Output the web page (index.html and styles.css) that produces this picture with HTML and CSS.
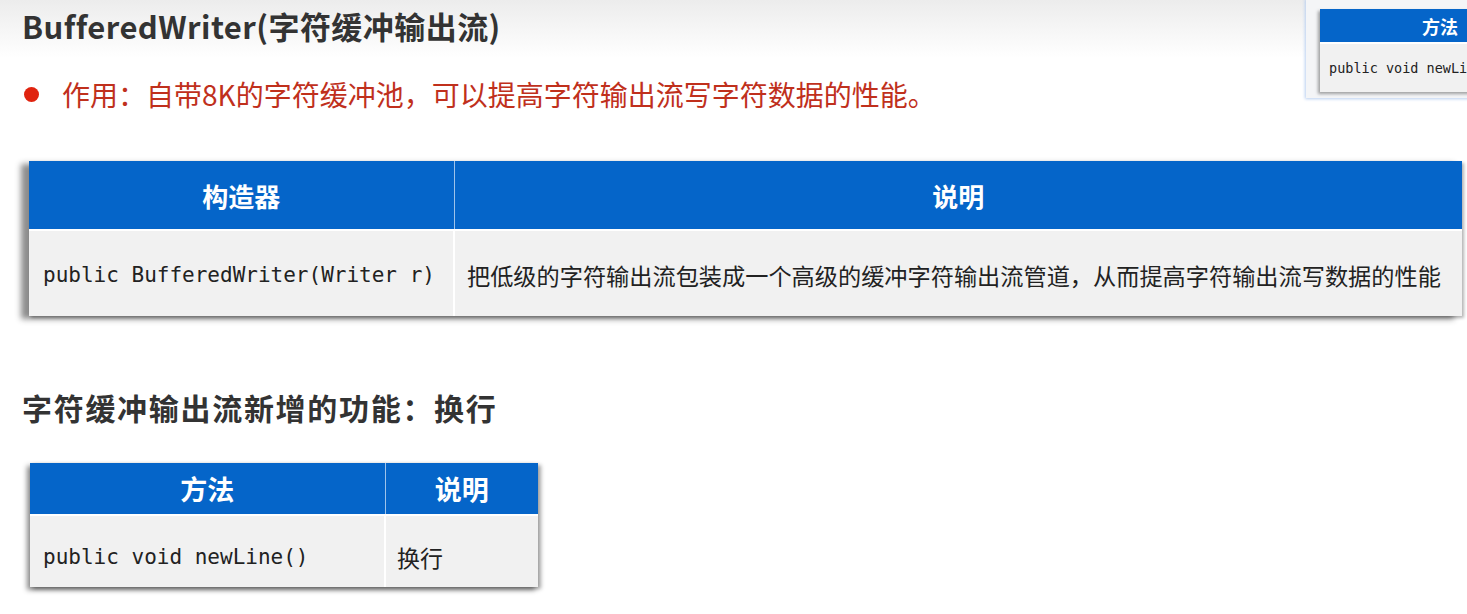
FILE: index.html
```html
<!DOCTYPE html>
<html lang="zh-CN">
<head>
<meta charset="utf-8">
<title>BufferedWriter</title>
<link rel="stylesheet" href="styles.css">
</head>
<body>
<div class="page">
  <h1 class="title">BufferedWriter(字符缓冲输出流)</h1>
  <p class="bullet"><span class="dot"></span>作用：自带8K的字符缓冲池，可以提高字符输出流写字符数据的性能。</p>

  <div class="tbl-wrap tbl-wrap-main">
    <table class="tbl tbl-main">
      <colgroup><col class="c1"><col class="c2"></colgroup>
      <thead>
        <tr><th>构造器</th><th>说明</th></tr>
      </thead>
      <tbody>
        <tr><td class="code">public BufferedWriter(Writer r)</td><td class="desc">把低级的字符输出流包装成一个高级的缓冲字符输出流管道，从而提高字符输出流写数据的性能</td></tr>
      </tbody>
    </table>
  </div>

  <h2 class="subtitle">字符缓冲输出流新增的功能：换行</h2>

  <div class="tbl-wrap tbl-wrap-small">
    <table class="tbl tbl-small">
      <colgroup><col class="s1"><col class="s2"></colgroup>
      <thead>
        <tr><th>方法</th><th>说明</th></tr>
      </thead>
      <tbody>
        <tr><td class="code">public void newLine()</td><td class="desc">换行</td></tr>
      </tbody>
    </table>
  </div>

  <div class="float-card">
    <table class="tbl tbl-mini">
      <thead><tr><th>方法</th></tr></thead>
      <tbody><tr><td class="code">public void newLine()</td></tr></tbody>
    </table>
  </div>
</div>
</body>
</html>
```

FILE: styles.css
```css
html, body {
  margin: 0;
  padding: 0;
}
body {
  width: 1467px;
  height: 614px;
  overflow: hidden;
  background: linear-gradient(to bottom, #ececec 0px, #f6f6f6 30px, #ffffff 58px, #ffffff 100%);
  font-family: "Noto Sans CJK SC", "Noto Sans", sans-serif;
  color: #222;
}
.page {
  position: relative;
  width: 1467px;
  height: 614px;
  overflow: hidden;
  padding-top: 6px;
  box-sizing: border-box;
}
.title {
  margin: 0 0 0 22px;
  font-size: 31px;
  line-height: 40px;
  font-weight: 700;
  color: #333;
  letter-spacing: 0.45px;
}
.bullet {
  margin: 28px 0 0 24px;
  display: flex;
  align-items: center;
  font-size: 28px;
  line-height: 40px;
  color: #c0301c;
}
.dot {
  width: 15px;
  height: 15px;
  border-radius: 50%;
  background: #e0230f;
  margin-right: 23px;
  flex: none;
}
.tbl-wrap {
  background: #fff;
}
.tbl-wrap-main {
  margin: 47px 0 0 29px;
  width: 1433px;
  box-shadow: -8px 3px 6px rgba(0,0,0,0.45), 2px 2px 3px rgba(0,0,0,0.3);
}
.tbl {
  border-collapse: collapse;
  table-layout: fixed;
  width: 100%;
}
.tbl th {
  background: #0565c9;
  color: #fff;
  font-weight: 700;
  text-align: center;
  padding: 0;
  border-right: 1px solid #9fc3ea;
  border-bottom: 2px solid #ffffff;
}
.tbl th:last-child {
  border-right: none;
}
.tbl td {
  background: #f1f1f1;
  padding: 0;
  border-right: 2px solid #ffffff;
  vertical-align: middle;
}
.tbl td:last-child {
  border-right: none;
}
.code {
  font-family: "DejaVu Sans Mono", "Liberation Mono", monospace;
  color: #222;
}
.desc {
  color: #222;
}
.tbl-main col.c1 { width: 425px; }
.tbl-main th {
  height: 68px;
  font-size: 26px;
}
.tbl-main td {
  height: 82px;
  padding-top: 3px;
}
.tbl-main td.code {
  font-size: 21px;
  padding-left: 14px;
}
.tbl-main td.desc {
  font-size: 23.2px;
  padding-left: 12px;
}
.subtitle {
  margin: 71px 0 0 22px;
  font-size: 30px;
  line-height: 40px;
  font-weight: 700;
  color: #333;
  letter-spacing: 1.7px;
}
.tbl-wrap-small {
  margin: 36px 0 0 30px;
  width: 508px;
  box-shadow: -3px 3px 5px rgba(0,0,0,0.45), 3px 2px 4px rgba(0,0,0,0.35);
}
.tbl-small col.s1 { width: 355px; }
.tbl-small th {
  height: 51px;
  font-size: 27px;
}
.tbl-small td {
  height: 61px;
  padding-top: 10px;
}
.tbl-small td.code {
  font-size: 21px;
  padding-left: 13px;
}
.tbl-small td.desc {
  font-size: 23px;
  padding-left: 11px;
}
.float-card {
  position: absolute;
  left: 1306px;
  top: 0;
  width: 200px;
  height: 98px;
  background: #f4f5f7;
  box-shadow: 0 0 3px 1px #b9cff0;
  padding: 9px 0 0 14px;
  box-sizing: border-box;
}
.tbl-mini {
  width: 190px;
  box-shadow: -2px 2px 3px rgba(0,0,0,0.35);
}
.tbl-mini th {
  height: 33px;
  font-size: 18px;
  text-align: left;
  padding-left: 102px;
}
.tbl-mini td {
  height: 48px;
  font-size: 13.5px;
  padding-left: 9px;
  white-space: nowrap;
  overflow: hidden;
}
```
